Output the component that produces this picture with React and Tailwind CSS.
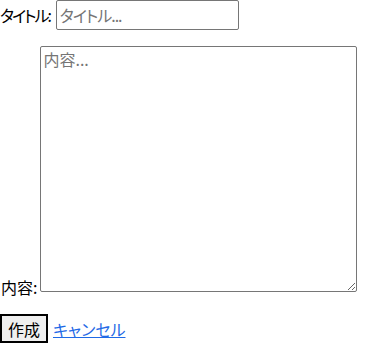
export default function App() {
  return (
    <form className="font-['Noto_Sans_CJK_JP','Noto_Sans',sans-serif] text-[16px] text-black [font-feature-settings:'palt']">
      {/* タイトル */}
      <div className="flex items-center">
        <label htmlFor="title" className="leading-none tracking-[-2px] pr-[6px]">タイトル:</label>
        <input
          id="title"
          type="text"
          placeholder="タイトル..."
          className="w-[183px] h-[30px] border border-[#767676] rounded-[2px] px-[3px] text-[16px] tracking-[-1px] placeholder:text-[#757575] outline-none"
        />
      </div>

      {/* 内容 */}
      <div className="flex items-end mt-[16px]">
        <label htmlFor="body" className="leading-none pl-[1px] pr-[3px] mb-[-3px]">内容:</label>
        <textarea
          id="body"
          placeholder="内容..."
          className="w-[317px] h-[246px] border border-[#767676] rounded-[2px] px-[2px] py-[2px] text-[16px] leading-[20px] placeholder:text-[#757575] outline-none"
        />
      </div>

      {/* ボタン */}
      <div className="flex items-center gap-[5px] mt-[22px]">
        <button
          type="submit"
          className="h-[29px] w-[48px] border-2 border-black bg-[#efefef] text-[16px] leading-none text-black"
        >
          作成
        </button>
        <a href="#" className="text-[#1f6ae6] underline leading-none">キャンセル</a>
      </div>
    </form>
  )
}
